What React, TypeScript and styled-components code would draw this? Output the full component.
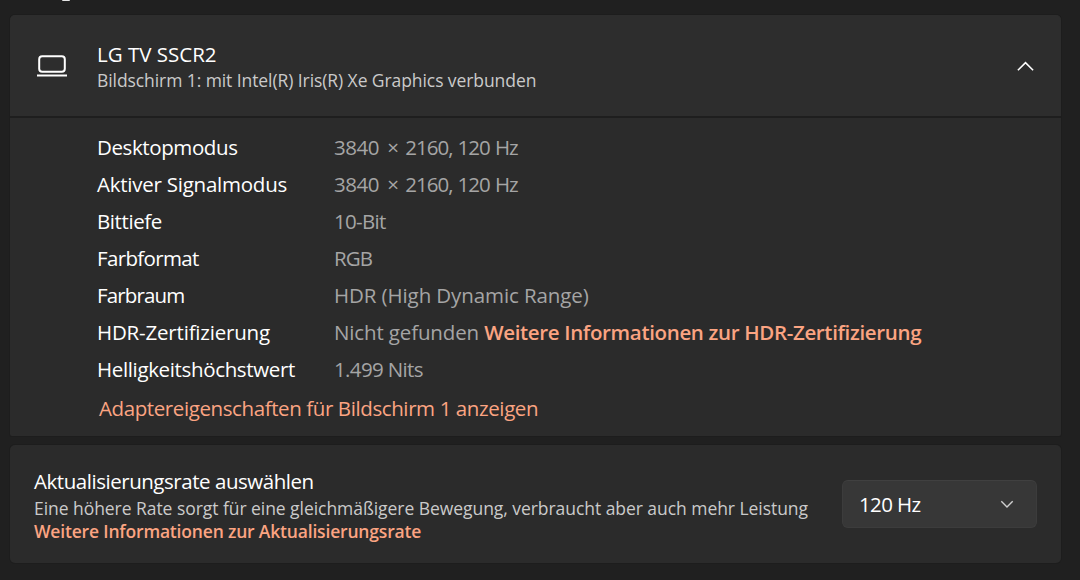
import React from 'react'
import styled, { createGlobalStyle } from 'styled-components'

const GlobalStyle = createGlobalStyle`
  * {
    box-sizing: border-box;
  }

  body {
    margin: 0;
    background: #202020;
    color: #ffffff;
    font-family: 'Open Sans', 'Noto Sans', sans-serif;
    font-size: 20.5px;
    overflow: hidden;
  }
`

const Page = styled.main`
  display: flex;
  flex-direction: column;
  width: 1080px;
  height: 580px;
  padding: 0 19px 0 10px;
`

// tail of the section heading that is scrolled out of view
const HeadingTail = styled.div`
  width: 8px;
  height: 1px;
  margin: 0 0 14px 52px;
  background: #e4e4e4;
  border-radius: 0 0 4px 4px;
`

const Card = styled.section`
  background: #2b2b2b;
  border-radius: 5px;
  box-shadow: 0 0 0 1px #1d1d1d;
`

const DisplayCard = styled(Card)`
  height: 421px;
  margin-bottom: 9px;
  border-radius: 5px 5px 2px 2px;
`

const CardHeader = styled.header`
  display: flex;
  align-items: center;
  height: 103px;
  padding: 0 27px;
  background: #2d2d2d;
  border-bottom: 2px solid #1e1e1e;
  border-radius: 5px 5px 0 0;
`

const HeaderText = styled.div`
  flex: 1;
  margin-left: 30px;
  padding-top: 3px;
`

const Text = styled.span<{ $track?: number; $words?: number }>`
  letter-spacing: ${({ $track = 0 }) => $track}px;
  word-spacing: ${({ $words = 0 }) => $words}px;
  white-space: nowrap;
`

const Title = styled(Text)<{ $height: number }>`
  display: block;
  margin-bottom: 1px;
  line-height: ${({ $height }) => $height}px;
`

const Subtitle = styled(Text)`
  display: block;
  color: #cacaca;
  font-size: 17.5px;
  line-height: 24px;
`

const Link = styled(Text)`
  color: #fba482;
`

const BoldLink = styled(Link)`
  font-weight: 600;
`

const SmallLink = styled(BoldLink)`
  display: block;
  font-size: 17.5px;
  line-height: 23px;
`

const Details = styled.dl`
  display: grid;
  grid-template-columns: 237px 1fr;
  grid-auto-rows: 37px;
  margin: 0;
  padding: 11px 0 0 87px;
  line-height: 37px;
`

const Label = styled.dt`
  white-space: nowrap;
`

const Value = styled.dd`
  margin: 0;
  color: #a5a5a5;
  white-space: nowrap;
`

const Times = styled.span`
  margin: 0 1px 0 3px;
`

const AdapterLink = styled.div`
  margin-left: 89px;
  line-height: 41px;
`

const RateCard = styled(Card)`
  display: flex;
  align-items: center;
  justify-content: space-between;
  height: 118px;
  padding: 0 24px;
`

const RateText = styled.div`
  padding-top: 3px;
`

const Select = styled.button`
  display: flex;
  align-items: center;
  justify-content: space-between;
  width: 195px;
  height: 48px;
  padding: 0 22px 0 16px;
  background: #373737;
  border: 1px solid #3c3c3c;
  border-top-color: #404040;
  border-radius: 6px;
  color: #ffffff;
  font: inherit;
`

const DisplayIcon = () => (
  <svg width="30" height="24" viewBox="0 0 30 24" fill="none" stroke="#ffffff" strokeWidth="2">
    <rect x="2.2" y="2.2" width="25.6" height="15.6" rx="3" />
    <path d="M0 21.5H30" />
  </svg>
)

const ChevronUp = () => (
  <svg width="18" height="10" viewBox="0 0 18 10" fill="none" stroke="#ffffff" strokeWidth="1.6">
    <path d="M1.9 9.2L9.5 1.6L17.1 9.2" />
  </svg>
)

const ChevronDown = () => (
  <svg width="14" height="9" viewBox="0 0 14 9" fill="none" stroke="#cfcfcf" strokeWidth="1.4">
    <path d="M1.3 1.2L7 6.9L12.7 1.2" />
  </svg>
)

const Mode = () => (
  <>
    <Text $track={-0.5}>3840</Text> <Times>×</Times>{' '}
    <Text $track={-1} $words={0.8}>
      2160, 120 Hz
    </Text>
  </>
)

const details = [
  { label: 'Desktopmodus', value: <Mode />, labelTrack: -0.4, valueTrack: 0 },
  { label: 'Aktiver Signalmodus', value: <Mode />, labelTrack: -0.24, valueTrack: 0 },
  { label: 'Bittiefe', value: '10-Bit', labelTrack: -0.4, valueTrack: -0.7 },
  { label: 'Farbformat', value: 'RGB', labelTrack: -0.65, valueTrack: -0.9 },
  { label: 'Farbraum', value: 'HDR (High Dynamic Range)', labelTrack: -0.85, valueTrack: -0.1 },
  {
    label: 'HDR-Zertifizierung',
    value: 'Nicht gefunden ',
    link: 'Weitere Informationen zur HDR-Zertifizierung',
    labelTrack: -0.19,
    valueTrack: -0.14,
  },
  { label: 'Helligkeitshöchstwert', value: '1.499 Nits', labelTrack: -0.35, valueTrack: -0.65 },
]

export default function App() {
  return (
    <>
      <GlobalStyle />
      <Page>
        <HeadingTail />
        <DisplayCard>
          <CardHeader>
            <DisplayIcon />
            <HeaderText>
              <Title $height={25}>LG TV SSCR2</Title>
              <Subtitle $track={-0.08}>Bildschirm 1: mit Intel(R) Iris(R) Xe Graphics verbunden</Subtitle>
            </HeaderText>
            <ChevronUp />
          </CardHeader>
          <Details>
            {details.map(({ label, value, link, labelTrack, valueTrack }) => (
              <React.Fragment key={label}>
                <Label>
                  <Text $track={labelTrack}>{label}</Text>
                </Label>
                <Value>
                  <Text $track={valueTrack}>{value}</Text>
                  {link && <BoldLink $track={-0.34}>{link}</BoldLink>}
                </Value>
              </React.Fragment>
            ))}
          </Details>
          <AdapterLink>
            <Link $track={-0.4}>Adaptereigenschaften für Bildschirm 1 anzeigen</Link>
          </AdapterLink>
        </DisplayCard>
        <RateCard>
          <RateText>
            <Title $height={27} $track={-0.46}>
              Aktualisierungsrate auswählen
            </Title>
            <Subtitle $track={-0.05}>
              Eine höhere Rate sorgt für eine gleichmäßigere Bewegung, verbraucht aber auch mehr Leistung
            </Subtitle>
            <SmallLink $track={-0.18}>Weitere Informationen zur Aktualisierungsrate</SmallLink>
          </RateText>
          <Select>
            <Text $track={-0.6}>120 Hz</Text>
            <ChevronDown />
          </Select>
        </RateCard>
      </Page>
    </>
  )
}
